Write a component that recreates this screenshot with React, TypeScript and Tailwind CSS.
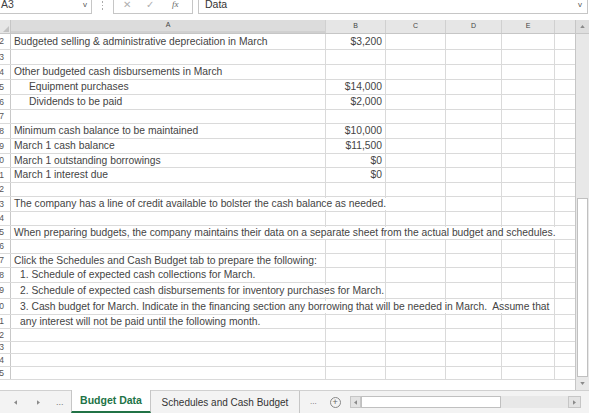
import React from "react";

const COLS = [315, 60, 60, 56, 53, 20];
const LETTERS = ["A", "B", "C", "D", "E", ""];

type Row = { n: number; h: number; a?: string; b?: string; indent?: number };

const ROWS: Row[] = [
  { n: 22, h: 16, a: "Budgeted selling & administrative depreciation in March", b: "$3,200" },
  { n: 23, h: 15 },
  { n: 24, h: 15, a: "Other budgeted cash disbursements in March" },
  { n: 25, h: 15, a: "Equipment purchases", b: "$14,000", indent: 15 },
  { n: 26, h: 15, a: "Dividends to be paid", b: "$2,000", indent: 15 },
  { n: 27, h: 14 },
  { n: 28, h: 15, a: "Minimum cash balance to be maintained", b: "$10,000" },
  { n: 29, h: 15, a: "March 1 cash balance", b: "$11,500" },
  { n: 30, h: 14, a: "March 1 outstanding borrowings", b: "$0" },
  { n: 31, h: 15, a: "March 1 interest due", b: "$0" },
  { n: 32, h: 14 },
  { n: 33, h: 15, a: "The company has a line of credit available to bolster the cash balance as needed." },
  { n: 34, h: 14 },
  { n: 35, h: 14, a: "When preparing budgets, the company maintains their data on a separate sheet from the actual budget and schedules." },
  { n: 36, h: 14 },
  { n: 37, h: 14, a: "Click the Schedules and Cash Budget tab to prepare the following:" },
  { n: 38, h: 15, a: "1. Schedule of expected cash collections for March.", indent: 6 },
  { n: 39, h: 16, a: "2. Schedule of expected cash disbursements for inventory purchases for March.", indent: 6 },
  { n: 40, h: 16, a: "3. Cash budget for March. Indicate in the financing section any borrowing that will be needed in March.  Assume that", indent: 6 },
  { n: 41, h: 14, a: "any interest will not be paid until the following month.", indent: 6 },
  { n: 42, h: 13 },
  { n: 43, h: 12 },
  { n: 44, h: 13 },
  { n: 45, h: 13 },
];

function SheetRow({ row }: { row: Row }) {
  return (
    <div className="flex border-b border-[#dadada]" style={{ height: row.h }}>
      <div className="w-[11px] shrink-0 overflow-hidden border-r border-[#c8c8c8] bg-white flex items-center justify-end pr-[6px]">
        <span className="text-[8.5px] text-[#555] leading-none">{row.n}</span>
      </div>
      <div className="w-[315px] shrink-0 border-r border-[#dadada] flex items-center pl-[3px]">
        {row.a && (
          <span
            className="relative z-10 whitespace-pre bg-white text-[#444] text-[10.3px] leading-[12px]"
            style={{ marginLeft: row.indent ?? 0 }}
          >
            {row.a}
          </span>
        )}
      </div>
      <div className="w-[60px] shrink-0 border-r border-[#dadada] flex items-center justify-end pr-[3px]">
        {row.b && <span className="text-[#444] text-[10.3px] leading-[12px]">{row.b}</span>}
      </div>
      <div className="w-[60px] shrink-0 border-r border-[#dadada]" />
      <div className="w-[56px] shrink-0 border-r border-[#dadada]" />
      <div className="w-[53px] shrink-0 border-r border-[#dadada]" />
      <div className="w-[20px] shrink-0" />
    </div>
  );
}

function Caret({ dir }: { dir: "up" | "down" | "left" | "right" }) {
  const pts = {
    up: "0,4 3,0 6,4",
    down: "0,0 3,4 6,0",
    left: "4,0 0,3 4,6",
    right: "0,0 4,3 0,6",
  }[dir];
  const vert = dir === "up" || dir === "down";
  return (
    <svg width={vert ? 5 : 3} height={vert ? 3 : 5} viewBox={vert ? "0 0 6 4" : "0 0 4 6"}>
      <polygon points={pts} fill="#8a8a8a" />
    </svg>
  );
}

export default function App() {
  return (
    <div
      className="w-[589px] h-[413px] bg-white overflow-hidden flex flex-col text-[#404040]"
      style={{ fontFamily: '"Liberation Sans", Arial, sans-serif' }}
    >
      {/* formula bar */}
      <div className="h-[14px] flex items-stretch shrink-0">
        <div className="w-[92px] border-r border-b border-[#c6c6c6] flex items-start justify-between pl-[1px] pr-[4px]">
          <span className="text-[10.5px] leading-[8px]">A3</span>
          <span className="text-[8px] leading-[9px] text-[#555]">v</span>
        </div>
        <div className="w-[21px] flex justify-center items-start pt-[1px]">
          <div className="flex flex-col gap-[2px]">
            <span className="w-[1.5px] h-[1.5px] bg-[#aaa]" />
            <span className="w-[1.5px] h-[1.5px] bg-[#aaa]" />
            <span className="w-[1.5px] h-[1.5px] bg-[#aaa]" />
          </div>
        </div>
        <div className="w-[80px] border-l border-r border-b border-[#c6c6c6] flex items-start text-[#b0b0b0]">
          <span className="ml-[9px] text-[10px] leading-[9px]">✕</span>
          <span className="ml-[15px] text-[10px] leading-[9px]">✓</span>
          <span className="ml-[18px] text-[9px] leading-[9px] italic text-[#666]" style={{ fontFamily: '"Liberation Serif", serif' }}>
            fx
          </span>
        </div>
        <div className="w-[5px]" />
        <div className="w-[390px] border-l border-r border-b border-[#c6c6c6] flex items-start justify-between pl-[6px] pr-[5px]">
          <span className="text-[10.5px] leading-[8px] text-[#333]">Data</span>
          <span className="text-[8px] leading-[9px] text-[#555]">v</span>
        </div>
      </div>
      <div className="h-[6px] shrink-0" />

      {/* sheet */}
      <div className="h-[370px] flex shrink-0">
        <div className="w-[575px] flex flex-col">
          <div className="h-[14px] flex bg-[#e6e6e6] border-b border-[#c6c6c6] shrink-0">
            <div className="w-[11px] shrink-0 border-r border-[#c6c6c6] flex items-end justify-end p-[1px]">
              <svg width="6" height="6" viewBox="0 0 6 6">
                <polygon points="6,0 6,6 0,6" fill="#c2c2c2" />
              </svg>
            </div>
            {COLS.map((w, i) => (
              <div
                key={i}
                className={`shrink-0 flex items-center justify-center text-[7px] text-[#444] ${i === 0 ? "bg-[#dcdcdc] border-b-2 border-[#217346]" : ""} ${i < 5 ? "border-r border-[#d0d0d0]" : ""}`}
                style={{ width: w }}
              >
                {LETTERS[i]}
              </div>
            ))}
          </div>
          {ROWS.map((r) => (
            <SheetRow key={r.n} row={r} />
          ))}
        </div>
        {/* vertical scrollbar */}
        <div className="w-[14px] flex flex-col bg-[#e8e8e8] border-l border-[#c6c6c6]">
          <div className="h-[14px] flex items-center justify-center bg-[#dedede] border-b border-[#c6c6c6]">
            <Caret dir="up" />
          </div>
          <div className="h-[164px]" />
          <div className="h-[179px] mx-[1px] bg-white border border-[#c0c0c0]" />
          <div className="flex-1 flex items-center justify-center">
            <Caret dir="down" />
          </div>
        </div>
      </div>

      {/* sheet tabs */}
      <div className="flex-1 flex items-stretch bg-[#f3f3f3] border-t border-[#d0d0d0]">
        <div className="w-[71px] flex items-center text-[#777]">
          <span className="ml-[14px]"><Caret dir="left" /></span>
          <span className="ml-[20px]"><Caret dir="right" /></span>
          <span className="ml-[16px] text-[9px] leading-none">...</span>
        </div>
        <div className="w-[80px] bg-white border-l border-r border-[#c6c6c6] border-b-2 border-b-[#217346] flex items-center justify-center -mt-[1px]">
          <span className="text-[10.5px] font-bold text-[#217346]">Budget Data</span>
        </div>
        <div className="w-[149px] border-r border-[#c6c6c6] flex items-center justify-center">
          <span className="text-[10px] text-[#333]">Schedules and Cash Budget</span>
        </div>
        <div className="flex items-center">
          <span className="ml-[10px] text-[8px] leading-none text-[#666]">...</span>
          <span className="ml-[13px] w-[11px] h-[11px] rounded-full border border-[#888] flex items-center justify-center text-[9px] leading-none text-[#666]">
            +
          </span>
        </div>
        <div className="flex items-center ml-[9px]">
          <div className="h-[12px] w-[11px] bg-[#e3e3e3] border border-[#c6c6c6] flex items-center justify-center">
            <Caret dir="left" />
          </div>
          <div className="h-[12px] w-[140px] bg-white border border-[#c0c0c0]" />
          <div className="h-[12px] w-[67px] bg-[#e8e8e8]" />
          <div className="h-[12px] w-[13px] bg-[#e3e3e3] border border-[#c6c6c6] flex items-center justify-center">
            <Caret dir="right" />
          </div>
        </div>
      </div>
    </div>
  );
}
